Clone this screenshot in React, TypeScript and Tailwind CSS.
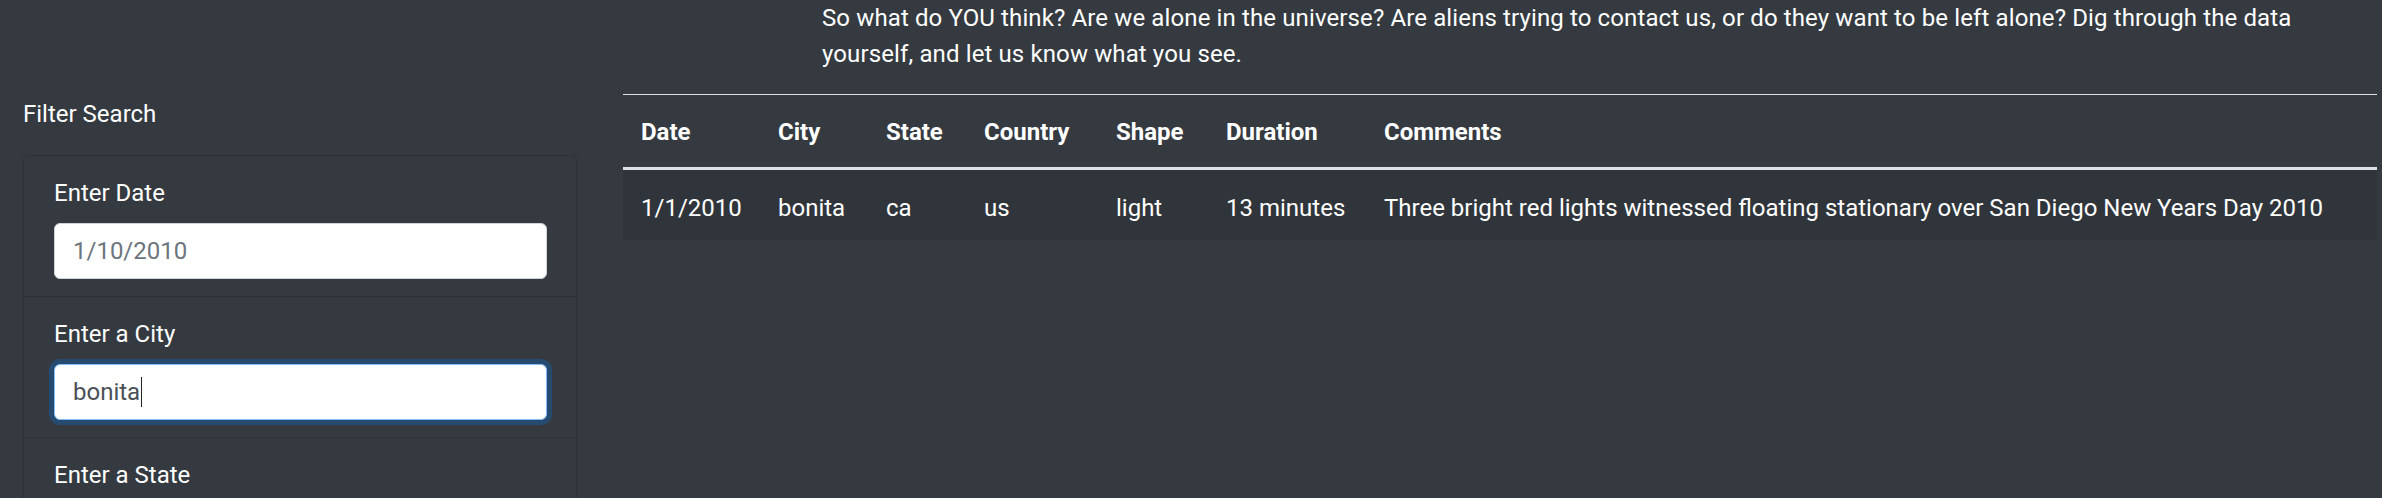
import React from "react";

const font = { fontFamily: 'Roboto, "Noto Sans", sans-serif' };

function Field({ label, value, placeholder, focused, last }: { label: string; value?: string; placeholder?: string; focused?: boolean; last?: boolean }) {
  return (
    <div className={`px-[30px] pt-[18px] pb-[17px] ${last ? "" : "border-b border-[#2d3237]"}`}>
      <div className="text-[24px] leading-[36px] text-white mb-[12px] pt-[1px]">{label}</div>
      <div
        className={`h-[56px] w-[493px] rounded-[6px] bg-white border flex items-center px-[18px] text-[24px] ${
          focused ? "border-[#80bdff] shadow-[0_0_0_5px_rgba(0,123,255,0.25)]" : "border-[#ced4da]"
        }`}
      >
        {value ? (
          <span className="text-[#495057] flex items-center">
            {value}
            {focused && <span className="inline-block w-[1px] h-[30px] bg-[#222] ml-[1px]" />}
          </span>
        ) : (
          <span className="text-[#6c757d]">{placeholder}</span>
        )}
      </div>
    </div>
  );
}

const cols = [
  { h: "Date", w: "w-[137px]", v: "1/1/2010" },
  { h: "City", w: "w-[108px]", v: "bonita" },
  { h: "State", w: "w-[98px]", v: "ca" },
  { h: "Country", w: "w-[132px]", v: "us" },
  { h: "Shape", w: "w-[110px]", v: "light" },
  { h: "Duration", w: "w-[158px]", v: "13 minutes" },
  { h: "Comments", w: "", v: "Three bright red lights witnessed floating stationary over San Diego New Years Day 2010" },
];

export default function App() {
  return (
    <div className="min-h-[498px] h-[498px] overflow-hidden bg-[#343a40] text-white" style={font}>
      <p className="pl-[822px] pr-[20px] text-[24px] leading-[36px] tracking-[0.12px] text-white whitespace-nowrap">
        So what do YOU think? Are we alone in the universe? Are aliens trying to contact us, or do they want to be left alone? Dig through the data
        <br />
        yourself, and let us know what you see.
      </p>
      <div className="flex mt-[22px]">
        <div className="w-[577px] pl-[23px] pt-[2px] shrink-0">
          <div className="text-[24px] leading-[36px] mb-[23px]">Filter Search</div>
          <div className="w-[554px] border border-[#2d3237] rounded-[6px]">
            <Field label="Enter Date" placeholder="1/10/2010" />
            <Field label="Enter a City" value="bonita" focused />
            <Field label="Enter a State" placeholder="ca" last />
          </div>
        </div>
        <div className="ml-[46px] w-[1754px]">
          <table className="w-full border-collapse text-left text-[24px] leading-[36px]">
            <thead>
              <tr className="border-t border-[#dee2e6] border-b-[3px] border-b-[#dee2e6]">
                {cols.map((c) => (
                  <th key={c.h} className={`${c.w} px-[18px] pt-[19px] pb-[17px] font-bold`}>
                    {c.h}
                  </th>
                ))}
              </tr>
            </thead>
            <tbody>
              <tr className="bg-[#30353b]">
                {cols.map((c) => (
                  <td key={c.h} className="px-[18px] pt-[20px] pb-[14px] font-normal whitespace-nowrap">
                    {c.v}
                  </td>
                ))}
              </tr>
            </tbody>
          </table>
        </div>
      </div>
    </div>
  );
}
